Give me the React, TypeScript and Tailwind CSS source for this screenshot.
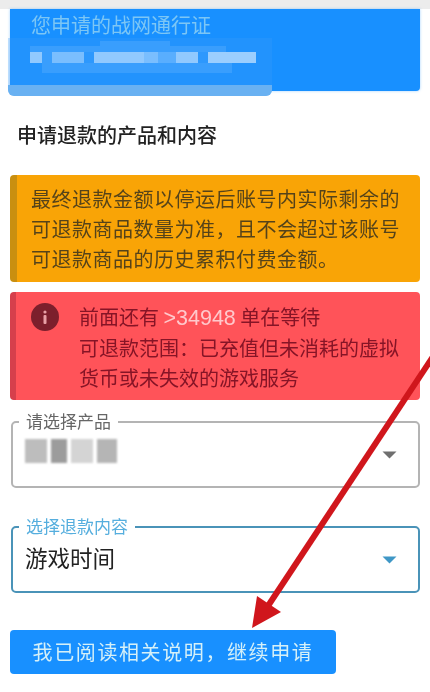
const cjk = 'font-["Noto_Sans_CJK_SC","Liberation_Sans",sans-serif]';

function Caret({ color }: { color: string }) {
  return (
    <svg width="15" height="8" viewBox="0 0 15 8" className="shrink-0">
      <path d="M0.5 0.5h14L7.5 7.5z" fill={color} />
    </svg>
  );
}

// pixelated cover over the account name
function Mosaic() {
  const cells: [string, string][] = [
    ['w-[12px]', 'bg-white/50'], ['w-[10px]', 'bg-white/10'], ['w-[32px]', 'bg-white/40'], ['w-[10px]', 'bg-white/5'],
    ['w-[50px]', 'bg-white/50'], ['w-[14px]', 'bg-white/40'], ['w-[18px]', 'bg-white/25'], ['w-[22px]', 'bg-white/50'],
    ['w-[10px]', 'bg-white/5'], ['w-[48px]', 'bg-white/55'],
  ];
  return (
    <div className="absolute -left-[2px] top-[29px] flex h-[58px] w-[264px] flex-col rounded-b-[6px] bg-[#3a9df8]/30 pl-[22px] blur-[0.7px]">
      <div className="mt-[3px] ml-[70px] h-[5px] w-[70px] bg-white/10" />
      <div className="h-[6px] w-[196px] bg-white/10" />
      <div className="flex h-[11px]">
        {cells.map(([w, bg], i) => (
          <div key={i} className={`${w} ${bg}`} />
        ))}
      </div>
      <div className="ml-[12px] h-[10px] w-[190px] bg-white/10" />
      <div className="mt-auto -ml-[22px] h-[11px] rounded-b-[6px] bg-[#69b1f2]" />
    </div>
  );
}

function Select({ label, value, focused }: { label: string; value?: string; focused?: boolean }) {
  return (
    <div className={`relative ml-[11px] mr-[10px] h-[67px] rounded-[5px] border-2 ${focused ? 'border-[#4a93b8]' : 'border-[#b4b4b4]'}`}>
      <span className={`absolute -top-[13px] left-[6px] bg-white px-[7px] text-[17px] leading-[22px] ${focused ? 'text-[#55aede]' : 'text-[#666]'}`}>
        {label}
      </span>
      <div className="flex h-full items-start justify-between pl-[12px] pr-[21px] pt-[13px]">
        {value ? (
          <span className="text-[22.5px] leading-[32px] text-[#222]">{value}</span>
        ) : (
          <div className="mt-[3px] flex h-[24px] w-[92px] gap-[4px] blur-[1.2px]">
            <div className="w-[22px] bg-[#bdbdbd]" />
            <div className="w-[16px] bg-[#9c9c9c]" />
            <div className="w-[22px] bg-[#d4d4d4]" />
            <div className="w-[20px] bg-[#b5b5b5]" />
          </div>
        )}
        <div className="mt-[15px]">
          <Caret color={focused ? '#3f97c6' : '#6f6f6f'} />
        </div>
      </div>
    </div>
  );
}

export default function App() {
  return (
    <div className={`relative h-[692px] w-[430px] overflow-hidden bg-white ${cjk}`}>
      <div className="blur-[0.4px]">
        <div className="h-[9px] bg-[#ececec]" />

        {/* account card */}
        <div className="relative mx-[10px] h-[82px] rounded-b-[4px] bg-[#1890ff] pl-[21px] pt-[2px] shadow-[0_0_3px_rgba(24,144,255,0.4)]">
          <p className="text-[20px] leading-[28px] text-[#7cc6f5]">您申请的战网通行证</p>
          <Mosaic />
        </div>

        <h2 className="ml-[17px] mt-[31px] text-[20px] font-medium leading-[26px] text-[#222]">申请退款的产品和内容</h2>

        {/* notices */}
        <div className="mx-[10px] mt-[27px] flex h-[107px] flex-col justify-center rounded-[4px] border-l-[7px] border-[#c98f10] bg-[#f9a406] pl-[14px]">
          <p className="whitespace-nowrap text-[20px] leading-[30px] tracking-[0.5px] text-[#55431a]">
            最终退款金额以停运后账号内实际剩余的
            <br />
            可退款商品数量为准，且不会超过该账号
            <br />
            可退款商品的历史累积付费金额。
          </p>
        </div>

        <div className="mx-[10px] mt-[10px] flex h-[108px] gap-[20px] rounded-[4px] border-l-[6px] border-[#d63f4c] bg-[#ff5359] pl-[15px] pt-[10px]">
          <div className="mt-[1px] flex h-[28px] w-[28px] shrink-0 items-center justify-center rounded-full bg-[#7c1f2c]">
            <svg width="6" height="14" viewBox="0 0 6 14">
              <circle cx="3" cy="2" r="1.6" fill="#e8a0a6" />
              <rect x="1.5" y="5" width="3" height="9" rx="1" fill="#e8a0a6" />
            </svg>
          </div>
          <p className="whitespace-nowrap text-[20px] leading-[30px] text-[#861426]">
            前面还有 <span className='font-["Liberation_Sans"] text-[21.5px] text-[#ffc9cc]'>&gt;34948</span> 单在等待
            <br />
            可退款范围：已充值但未消耗的虚拟
            <br />
            货币或未失效的游戏服务
          </p>
        </div>

        {/* selects */}
        <div className="mt-[21px]">
          <Select label="请选择产品" />
        </div>
        <div className="mt-[38px]">
          <Select label="选择退款内容" value="游戏时间" focused />
        </div>

        <button className="ml-[10px] mt-[37px] h-[44px] w-[326px] rounded-[4px] bg-[#1890ff] text-[20px] leading-[44px] tracking-[1.6px] text-[#d5f0f8]">
          我已阅读相关说明，继续申请
        </button>
      </div>

      {/* red annotation arrow */}
      <svg className="absolute left-0 top-0 blur-[0.4px]" width="430" height="692" viewBox="0 0 430 692">
        <path d="M436 352L264 612" stroke="#d0161c" strokeWidth="6" fill="none" />
        <path d="M252 628L257 596L281 612z" fill="#d0161c" />
      </svg>
    </div>
  );
}
